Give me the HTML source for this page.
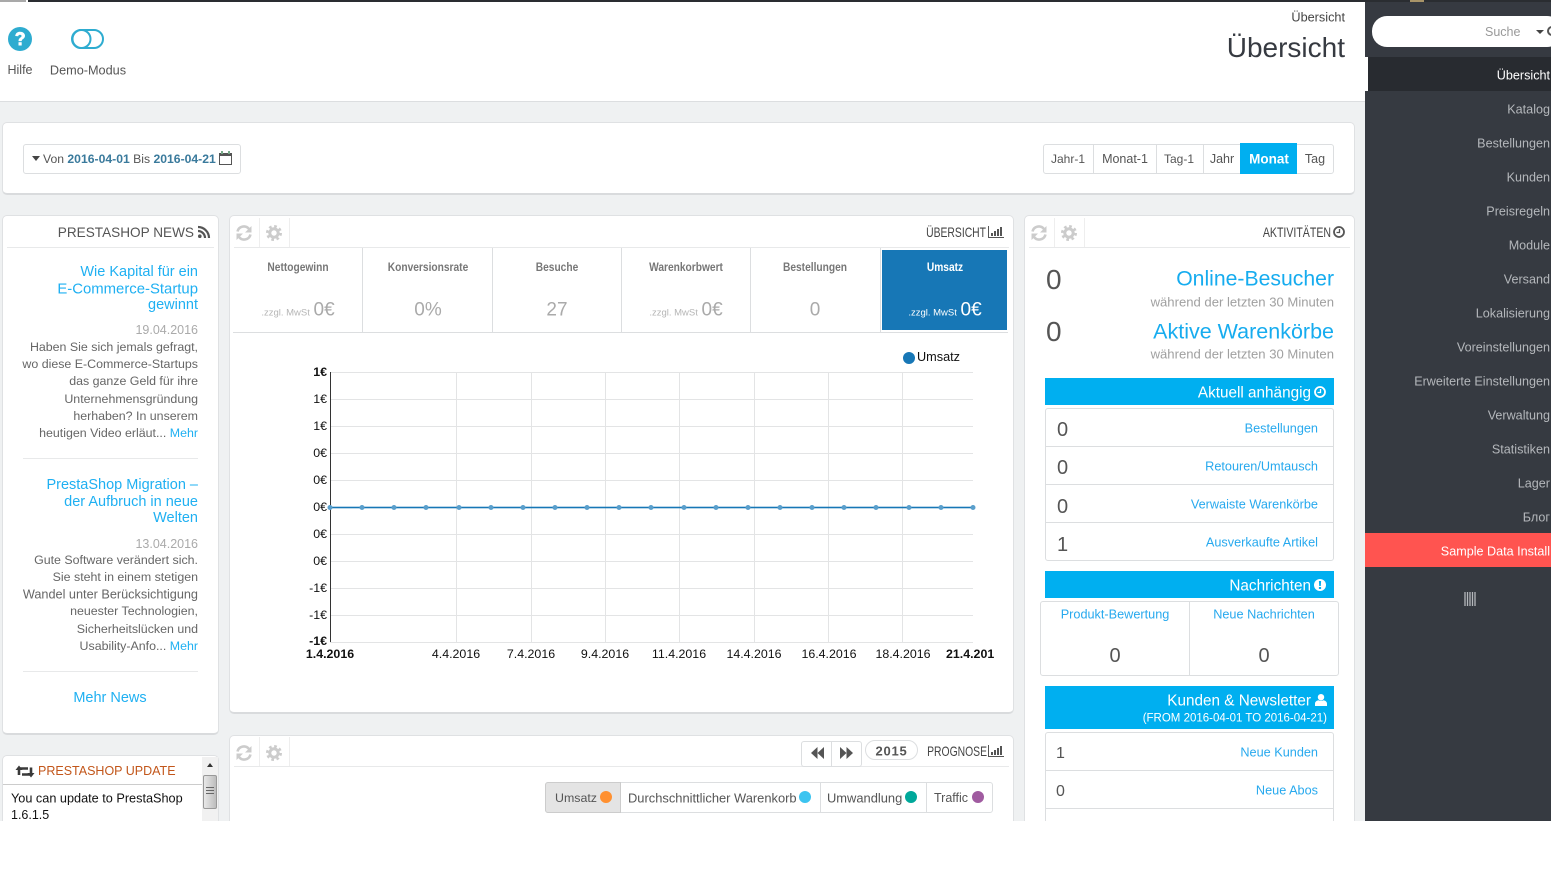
<!DOCTYPE html>
<html lang="de"><head><meta charset="utf-8"><title>Übersicht</title>
<style>
html,body{margin:0;padding:0;background:#fff}
#p{position:relative;width:1551px;height:821px;overflow:hidden;background:#eff1f2;font:13px "Liberation Sans",sans-serif;color:#555}
#w{position:relative;width:1551px;height:896px;overflow:hidden;background:#fff}
.b{position:absolute;box-sizing:border-box}
.l,.r,.c{position:absolute;white-space:nowrap;line-height:1}
.l{transform:translate(0,-50%)}.r{transform:translate(-100%,-50%)}.c{transform:translate(-50%,-50%)}
.panel{position:absolute;box-sizing:border-box;background:#fff;border:1px solid #dfe1e3;border-bottom:2px solid #d9dbdd;border-radius:5px}
.n{font-weight:400;transform:translate(-100%,-50%) scaleX(.74);transform-origin:100% 50%}
.bl{color:#1fb0f2}
.lk{color:#27a9ee;font-size:12.7px;margin-top:1px}
.side{color:#b4b7bb;font-size:12.6px;left:1550px;margin-top:1px}
.num{font-size:20px;color:#555}
.kl{font-weight:700;font-size:12px;color:#777;transform:translate(-50%,-50%) scaleX(.85)}
.kv{font-size:19px;color:#aaa}
.ks{font-size:9.5px;color:#b5b5b5}
.nt{color:#1fb0f2;font-size:14.5px;left:198px}
.nb{font-size:12.4px;color:#666;left:198px}
.nd{font-size:12.5px;color:#aaa;left:198px}
.bar{position:absolute;left:1045px;width:289px;background:#00aff0}
.wt{color:#fff;font-size:15.3px;margin-top:1px}
svg{position:absolute;overflow:visible}
</style></head><body>
<div id="w"><div id="p">

<!-- header -->
<div class="b" style="left:0;top:0;width:1365px;height:102px;background:#fff;border-bottom:1px solid #dcdee0"></div>
<div class="b" style="left:0;top:0;width:26px;height:2px;background:#a9a9a9"></div>
<div class="b" style="left:28px;top:0;width:1523px;height:2px;background:#2a2d31"></div>
<svg style="left:8px;top:27px" width="24" height="24" viewBox="0 0 24 24"><circle cx="12" cy="12" r="12" fill="#2eacd0"/><path d="M7.2 9C7.500 6 9.500 4.700 12 4.700c2.900 0 5 1.600 5 4.100 0 3.200-3.300 3.200-3.300 5.300h-3.200c0-3.500 3.100-3.600 3.100-5.100 0-.8-.7-1.300-1.600-1.300-1 0-1.600.6-1.800 1.600z" fill="#fff"/><rect x="10.500" y="15.200" width="3.200" height="3.300" fill="#fff"/></svg>
<svg style="left:71px;top:29px" width="33" height="20" viewBox="0 0 33 20"><rect x="1" y="1" width="31" height="18" rx="9" fill="#fff" stroke="#2eacd0" stroke-width="2"/><circle cx="10.500" cy="10" r="9" fill="#fff" stroke="#2eacd0" stroke-width="2"/></svg>
<span class="c" style="left:20px;top:70px;font-size:12.5px">Hilfe</span>
<span class="c" style="left:88px;top:71px;font-size:12.7px">Demo-Modus</span>
<span class="r" style="left:1345px;top:18px;font-size:12.7px;color:#444">Übersicht</span>
<span class="r" style="left:1345px;top:48px;font-size:28px;color:#363a41">Übersicht</span>

<!-- sidebar -->
<div class="b" style="left:1365px;top:2px;width:186px;height:819px;background:#363a41"></div>
<div class="b" style="left:1365px;top:57px;width:3px;height:34px;background:#fff"></div>
<div class="b" style="left:1368px;top:57px;width:183px;height:34px;background:#282b30"></div>
<div class="b" style="left:1410px;top:0;width:14px;height:2px;background:#a89468"></div>
<div class="b" style="left:1372px;top:16px;width:190px;height:31px;background:#fff;border-radius:15px"></div>
<span class="l" style="left:1485px;top:32px;font-size:12.5px;color:#999">Suche</span>
<div class="b" style="left:1536px;top:30px;border:4px solid transparent;border-top:4px solid #444;border-bottom:0"></div>
<div class="b" style="left:1547px;top:26px;width:10px;height:10px;border:2px solid #555;border-radius:50%"></div>
<span class="r side" style="top:75px;color:#fff">Übersicht</span>
<span class="r side" style="top:109px">Katalog</span>
<span class="r side" style="top:143px">Bestellungen</span>
<span class="r side" style="top:177px">Kunden</span>
<span class="r side" style="top:211px">Preisregeln</span>
<span class="r side" style="top:245px">Module</span>
<span class="r side" style="top:279px">Versand</span>
<span class="r side" style="top:313px">Lokalisierung</span>
<span class="r side" style="top:347px">Voreinstellungen</span>
<span class="r side" style="top:381px">Erweiterte Einstellungen</span>
<span class="r side" style="top:415px">Verwaltung</span>
<span class="r side" style="top:449px">Statistiken</span>
<span class="r side" style="top:483px">Lager</span>
<span class="r side" style="top:517px">Блог</span>
<div class="b" style="left:1365px;top:533px;width:186px;height:34px;background:#ff5450"></div>
<span class="r side" style="top:551px;color:#fff">Sample Data Install</span>
<svg style="left:1464px;top:592px" width="12" height="14"><path d="M1 0v14M3.500 0v14M6 0v14M8.500 0v14M11 0v14" stroke="#b4b7bb" stroke-width="1.300"/></svg>

<!-- date panel -->
<div class="panel" style="left:2px;top:122px;width:1353px;height:73px"></div>
<div class="b" style="left:23px;top:144px;width:218px;height:30px;background:#fff;border:1px solid #dcdee0;border-radius:3px"></div>
<div class="b" style="left:32px;top:156px;border:4.500px solid transparent;border-top:5px solid #444;border-bottom:0"></div>
<span class="l" style="left:43px;top:159px;font-size:12.2px">Von <b style="color:#3a7a9c">2016-04-01</b> Bis <b style="color:#3a7a9c">2016-04-21</b></span>
<svg style="left:219px;top:151px" width="13" height="14"><rect x=".5" y="2.500" width="12" height="11" fill="#fff" stroke="#555"/><rect x=".5" y="2.500" width="12" height="2.500" fill="#555"/><path d="M3 0v3M10 0v3" stroke="#7a8" stroke-width="2"/></svg>
<div class="b" style="left:1043px;top:144px;width:291px;height:30px;background:#fff;border:1px solid #dcdee0;border-radius:3px"></div>
<div class="b" style="left:1093px;top:144px;width:1px;height:30px;background:#dcdee0"></div>
<div class="b" style="left:1156px;top:144px;width:1px;height:30px;background:#dcdee0"></div>
<div class="b" style="left:1203px;top:144px;width:1px;height:30px;background:#dcdee0"></div>
<div class="b" style="left:1240px;top:143px;width:57px;height:31px;background:#00aff0"></div>
<span class="c" style="left:1068px;top:159px;font-size:12px">Jahr-1</span>
<span class="c" style="left:1125px;top:159px;font-size:12.5px">Monat-1</span>
<span class="c" style="left:1179px;top:159px;font-size:12px">Tag-1</span>
<span class="c" style="left:1222px;top:159px;font-size:12.5px">Jahr</span>
<span class="c" style="left:1269px;top:159px;font-size:13.5px;color:#fff;font-weight:700">Monat</span>
<span class="c" style="left:1315px;top:159px;font-size:12.5px">Tag</span>

<!-- news panel -->
<div class="panel" style="left:2px;top:215px;width:217px;height:520px"></div>
<span class="r" style="left:194px;top:233px;font-size:13.6px;color:#555">PRESTASHOP NEWS</span>
<svg style="left:198px;top:226px" width="12" height="12" viewBox="0 0 12 12"><circle cx="1.800" cy="10.200" r="1.800" fill="#555"/><path d="M0 5a7 7 0 0 1 7 7M0 1a11 11 0 0 1 11 11" fill="none" stroke="#555" stroke-width="2.200"/></svg>
<div class="b" style="left:7px;top:247px;width:207px;height:1px;background:#e8e9ea"></div>
<span class="r nt" style="top:272px">Wie Kapital für ein</span>
<span class="r nt" style="top:290px;font-size:14.9px">E-Commerce-Startup</span>
<span class="r nt" style="top:305px">gewinnt</span>
<span class="r nd" style="top:330px">19.04.2016</span>
<span class="r nb" style="top:347px">Haben Sie sich jemals gefragt,</span>
<span class="r nb" style="top:364px">wo diese E-Commerce-Startups</span>
<span class="r nb" style="top:381px">das ganze Geld für ihre</span>
<span class="r nb" style="top:399px">Unternehmensgründung</span>
<span class="r nb" style="top:416px">herhaben? In unserem</span>
<span class="r nb" style="top:433px">heutigen Video erläut... <span class="bl">Mehr</span></span>
<div class="b" style="left:23px;top:458px;width:175px;height:1px;background:#e8e9ea"></div>
<span class="r nt" style="top:485px">PrestaShop Migration –</span>
<span class="r nt" style="top:502px">der Aufbruch in neue</span>
<span class="r nt" style="top:518px">Welten</span>
<span class="r nd" style="top:544px">13.04.2016</span>
<span class="r nb" style="top:560px">Gute Software verändert sich.</span>
<span class="r nb" style="top:577px">Sie steht in einem stetigen</span>
<span class="r nb" style="top:595px;font-size:12.7px">Wandel unter Berücksichtigung</span>
<span class="r nb" style="top:611px">neuester Technologien,</span>
<span class="r nb" style="top:629px">Sicherheitslücken und</span>
<span class="r nb" style="top:646px">Usability-Anfo... <span class="bl">Mehr</span></span>
<div class="b" style="left:23px;top:671px;width:175px;height:1px;background:#e8e9ea"></div>
<span class="c bl" style="left:110px;top:698px;font-size:14.500px">Mehr News</span>

<!-- update panel -->
<div class="panel" style="left:2px;top:755px;width:217px;height:90px"></div>
<svg style="left:16px;top:765px" width="18" height="13" viewBox="0 0 18 13"><path d="M3 10V3.500h9M15 2.500v7H6" fill="none" stroke="#3a3a3a" stroke-width="2.600"/><path d="M-.5 5L3 .5 6.500 5zM11.500 8l3.500 4.500L18.500 8z" fill="#3a3a3a"/></svg>
<span class="l" style="left:38px;top:771px;font-size:12.500px;color:#c2561a">PRESTASHOP UPDATE</span>
<div class="b" style="left:3px;top:784px;width:199px;height:1px;background:#ccc"></div>
<span class="l" style="left:11px;top:799px;font-size:12.7px;color:#111">You can update to PrestaShop</span>
<span class="l" style="left:11px;top:815px;font-size:12.500px;color:#111">1.6.1.5</span>
<div class="b" style="left:202px;top:757px;width:16px;height:64px;background:#f1f1f1"></div>
<div class="b" style="left:207px;top:763px;border:3px solid transparent;border-bottom:4px solid #333;border-top:0"></div>
<div class="b" style="left:203px;top:775px;width:14px;height:34px;background:linear-gradient(90deg,#e8e8e8,#bdbdbd);border:1px solid #999;border-radius:2px"></div>
<svg style="left:206px;top:787px" width="8" height="8"><path d="M0 .5h8M0 3.500h8M0 6.500h8" stroke="#666"/></svg>

<!-- chart panel -->
<div class="panel" style="left:229px;top:215px;width:785px;height:499px"></div>
<div class="b" style="left:234px;top:247px;width:775px;height:1px;background:#e8e9ea"></div>
<div class="b" style="left:259px;top:218px;width:1px;height:29px;background:#eee"></div>
<div class="b" style="left:289px;top:218px;width:1px;height:29px;background:#eee"></div>
<svg style="left:236px;top:225px" width="16" height="16" viewBox="0 0 16 16"><path d="M1.500 6.500A6.500 6.500 0 0 1 13 4M14.500 9.500A6.500 6.500 0 0 1 3 12" fill="none" stroke="#ccc" stroke-width="2.600"/><path d="M15.500 1v6.500H9zM.5 15V8.500H7z" fill="#ccc"/></svg>
<svg style="left:266px;top:225px" width="16" height="16" viewBox="0 0 16 16"><circle cx="8" cy="8" r="4.200" fill="none" stroke="#ccc" stroke-width="3"/><circle cx="8" cy="8" r="6.600" fill="none" stroke="#ccc" stroke-width="2.800" stroke-dasharray="2.600 2.580"/></svg>
<span class="r n" style="left:986px;top:232px;font-size:14px;color:#444">ÜBERSICHT</span>
<svg style="left:988px;top:226px" width="16" height="12"><path d="M.5 0v11.500H16" fill="none" stroke="#555"/><path d="M3 7h2v3H3zM6 5h2v5H6zM9 3h2v7H9zM12 1h2v9h-2z" fill="#555"/></svg>

<div class="b" style="left:233px;top:332px;width:775px;height:1px;background:#dcdee0"></div>
<div class="b" style="left:362px;top:248px;width:1px;height:84px;background:#dcdee0"></div>
<div class="b" style="left:492px;top:248px;width:1px;height:84px;background:#dcdee0"></div>
<div class="b" style="left:621px;top:248px;width:1px;height:84px;background:#dcdee0"></div>
<div class="b" style="left:750px;top:248px;width:1px;height:84px;background:#dcdee0"></div>
<div class="b" style="left:880px;top:248px;width:1px;height:84px;background:#dcdee0"></div>
<div class="b" style="left:882px;top:250px;width:125px;height:80px;background:#1777b6"></div>
<span class="c kl" style="left:298px;top:267px">Nettogewinn</span>
<span class="c kl" style="left:428px;top:267px">Konversionsrate</span>
<span class="c kl" style="left:557px;top:267px">Besuche</span>
<span class="c kl" style="left:686px;top:267px">Warenkorbwert</span>
<span class="c kl" style="left:815px;top:267px">Bestellungen</span>
<span class="c kl" style="left:945px;top:267px;color:#fff">Umsatz</span>
<span class="c" style="left:298px;top:310px;white-space:nowrap"><span class="ks">.zzgl. MwSt</span> <span class="kv">0€</span></span>
<span class="c kv" style="left:428px;top:310px">0%</span>
<span class="c kv" style="left:557px;top:310px">27</span>
<span class="c" style="left:686px;top:310px"><span class="ks">.zzgl. MwSt</span> <span class="kv">0€</span></span>
<span class="c kv" style="left:815px;top:310px">0</span>
<span class="c" style="left:945px;top:310px;color:#fff"><span class="ks" style="color:#fff">.zzgl. MwSt</span> <span class="kv" style="color:#fff">0€</span></span>

<svg style="left:0;top:0" width="1551" height="821" font-family="Liberation Sans, sans-serif" font-size="12.4" fill="#111">
<path d="M330 372.500H973M330 399.500H973M330 426.500H973M330 453.500H973M330 480.500H973M330 534.500H973M330 561.500H973M330 588.500H973M330 615.500H973M330 642.500H973M456.500 372V642M531.500 372V642M605.500 372V642M679.500 372V642M754.500 372V642M828.500 372V642M902.500 372V642" stroke="#e3e4e5" fill="none"/>
<path d="M330.500 372V642" stroke="#333"/>
<path d="M330 507.500H973" stroke="#1777b6" stroke-opacity=".4" stroke-width="2.500"/>
<path d="M330 507.500H973" stroke="#1777b6" stroke-width="1"/>
<g fill="#5a9fcc"><circle cx="330" cy="507.500" r="2.500"/><circle cx="362" cy="507.500" r="2.500"/><circle cx="394" cy="507.500" r="2.500"/><circle cx="426" cy="507.500" r="2.500"/><circle cx="459" cy="507.500" r="2.500"/><circle cx="491" cy="507.500" r="2.500"/><circle cx="523" cy="507.500" r="2.500"/><circle cx="555" cy="507.500" r="2.500"/><circle cx="587" cy="507.500" r="2.500"/><circle cx="619" cy="507.500" r="2.500"/><circle cx="651" cy="507.500" r="2.500"/><circle cx="684" cy="507.500" r="2.500"/><circle cx="716" cy="507.500" r="2.500"/><circle cx="748" cy="507.500" r="2.500"/><circle cx="780" cy="507.500" r="2.500"/><circle cx="812" cy="507.500" r="2.500"/><circle cx="844" cy="507.500" r="2.500"/><circle cx="876" cy="507.500" r="2.500"/><circle cx="909" cy="507.500" r="2.500"/><circle cx="941" cy="507.500" r="2.500"/><circle cx="973" cy="507.500" r="2.500"/></g>
<g text-anchor="end"><text x="327" y="376" font-weight="700">1€</text><text x="327" y="403">1€</text><text x="327" y="430">1€</text><text x="327" y="457">0€</text><text x="327" y="484">0€</text><text x="327" y="511">0€</text><text x="327" y="538">0€</text><text x="327" y="565">0€</text><text x="327" y="592">-1€</text><text x="327" y="619">-1€</text><text x="327" y="645" font-weight="700">-1€</text></g>
<g text-anchor="middle"><text x="330" y="658" font-weight="700">1.4.2016</text><text x="456" y="658">4.4.2016</text><text x="531" y="658">7.4.2016</text><text x="605" y="658">9.4.2016</text><text x="679" y="658">11.4.2016</text><text x="754" y="658">14.4.2016</text><text x="829" y="658">16.4.2016</text><text x="903" y="658">18.4.2016</text></g>
<text x="946" y="658" font-weight="700">21.4.201</text>
<circle cx="909" cy="358" r="6" fill="#1777b6"/><text x="917" y="361" font-size="12.700">Umsatz</text>
</svg>

<!-- prognose panel -->
<div class="panel" style="left:229px;top:735px;width:785px;height:110px"></div>
<div class="b" style="left:234px;top:766px;width:775px;height:1px;background:#e8e9ea"></div>
<div class="b" style="left:259px;top:737px;width:1px;height:29px;background:#eee"></div>
<div class="b" style="left:289px;top:737px;width:1px;height:29px;background:#eee"></div>
<svg style="left:236px;top:745px" width="16" height="16" viewBox="0 0 16 16"><path d="M1.500 6.500A6.500 6.500 0 0 1 13 4M14.500 9.500A6.500 6.500 0 0 1 3 12" fill="none" stroke="#ccc" stroke-width="2.600"/><path d="M15.500 1v6.500H9zM.5 15V8.500H7z" fill="#ccc"/></svg>
<svg style="left:266px;top:745px" width="16" height="16" viewBox="0 0 16 16"><circle cx="8" cy="8" r="4.200" fill="none" stroke="#ccc" stroke-width="3"/><circle cx="8" cy="8" r="6.600" fill="none" stroke="#ccc" stroke-width="2.800" stroke-dasharray="2.600 2.580"/></svg>
<div class="b" style="left:801px;top:741px;width:61px;height:26px;border:1px solid #dcdee0;border-radius:3px;background:#fff"></div>
<div class="b" style="left:831px;top:741px;width:1px;height:26px;background:#dcdee0"></div>
<svg style="left:811px;top:747px" width="13" height="12"><path d="M6.500 0v12L0 6zM13 0v12L6.500 6z" fill="#555"/></svg>
<svg style="left:840px;top:747px" width="13" height="12"><path d="M0 0v12l6.500-6zM6.500 0v12L13 6z" fill="#555"/></svg>
<div class="b" style="left:865px;top:740px;width:53px;height:20px;border:1px solid #dcdee0;border-radius:10px"></div>
<span class="c" style="left:891.500px;top:751px;font-size:13px;font-weight:700;letter-spacing:.8px;color:#555">2015</span>
<span class="r n" style="left:987px;top:751px;font-size:14px;color:#444">PROGNOSE</span>
<svg style="left:988px;top:745px" width="16" height="12"><path d="M.5 0v11.500H16" fill="none" stroke="#555"/><path d="M3 7h2v3H3zM6 5h2v5H6zM9 3h2v7H9zM12 1h2v9h-2z" fill="#555"/></svg>
<div class="b" style="left:545px;top:782px;width:448px;height:31px;border:1px solid #dcdee0;border-radius:3px;background:#fff"></div>
<div class="b" style="left:545px;top:782px;width:76px;height:31px;background:#e4e4e4;border:1px solid #ccc;border-radius:3px 0 0 3px"></div>
<div class="b" style="left:820px;top:782px;width:1px;height:31px;background:#dcdee0"></div>
<div class="b" style="left:926px;top:782px;width:1px;height:31px;background:#dcdee0"></div>
<span class="l" style="left:555px;top:798px;font-size:12.4px">Umsatz</span>
<span class="l" style="left:628px;top:799px;font-size:12.9px">Durchschnittlicher Warenkorb</span>
<span class="l" style="left:827px;top:799px;font-size:12.9px">Umwandlung</span>
<span class="l" style="left:934px;top:798px;font-size:12.500px">Traffic</span>
<svg style="left:0;top:0" width="1551" height="821"><circle cx="606" cy="797" r="6" fill="#ff9030"/><circle cx="805" cy="797" r="6" fill="#3cc4f0"/><circle cx="911" cy="797" r="6" fill="#00a89a"/><circle cx="978" cy="797" r="6" fill="#a05ba0"/></svg>

<!-- activity panel -->
<div class="panel" style="left:1024px;top:215px;width:331px;height:630px"></div>
<div class="b" style="left:1029px;top:247px;width:321px;height:1px;background:#e8e9ea"></div>
<div class="b" style="left:1054px;top:218px;width:1px;height:29px;background:#eee"></div>
<div class="b" style="left:1084px;top:218px;width:1px;height:29px;background:#eee"></div>
<svg style="left:1031px;top:225px" width="16" height="16" viewBox="0 0 16 16"><path d="M1.500 6.500A6.500 6.500 0 0 1 13 4M14.500 9.500A6.500 6.500 0 0 1 3 12" fill="none" stroke="#ccc" stroke-width="2.600"/><path d="M15.500 1v6.500H9zM.5 15V8.500H7z" fill="#ccc"/></svg>
<svg style="left:1061px;top:225px" width="16" height="16" viewBox="0 0 16 16"><circle cx="8" cy="8" r="4.200" fill="none" stroke="#ccc" stroke-width="3"/><circle cx="8" cy="8" r="6.600" fill="none" stroke="#ccc" stroke-width="2.800" stroke-dasharray="2.600 2.580"/></svg>
<span class="r n" style="left:1331px;top:232px;font-size:14px;color:#444;transform:translate(-100%,-50%) scaleX(.755)">AKTIVITÄTEN</span>
<svg style="left:1333px;top:226px" width="12" height="12" viewBox="0 0 12 12"><circle cx="6" cy="6" r="5" fill="none" stroke="#555" stroke-width="1.800"/><path d="M6.500 3v3.500H3.500" fill="none" stroke="#555" stroke-width="1.300"/></svg>
<span class="l" style="left:1046px;top:280px;font-size:28px;color:#555">0</span>
<span class="r bl" style="left:1334px;top:279px;font-size:21.2px;color:#16acef">Online-Besucher</span>
<span class="r" style="left:1334px;top:302px;font-size:13.1px;color:#a0a0a0">während der letzten 30 Minuten</span>
<span class="l" style="left:1046px;top:332px;font-size:28px;color:#555">0</span>
<span class="r bl" style="left:1334px;top:332px;font-size:21.5px;color:#16acef">Aktive Warenkörbe</span>
<span class="r" style="left:1334px;top:354px;font-size:13.1px;color:#a0a0a0">während der letzten 30 Minuten</span>

<div class="bar" style="top:378px;height:27px"></div>
<span class="r wt" style="left:1311px;top:392px">Aktuell anhängig</span>
<svg style="left:1314px;top:386px" width="12" height="12" viewBox="0 0 12 12"><circle cx="6" cy="6" r="5" fill="none" stroke="#fff" stroke-width="1.800"/><path d="M6.500 3v3.500H3.500" fill="none" stroke="#fff" stroke-width="1.300"/></svg>
<div class="b" style="left:1045px;top:408px;width:289px;height:153px;border:1px solid #dcdee0;border-radius:3px"></div>
<div class="b" style="left:1045px;top:446px;width:289px;height:1px;background:#dcdee0"></div>
<div class="b" style="left:1045px;top:484px;width:289px;height:1px;background:#dcdee0"></div>
<div class="b" style="left:1045px;top:522px;width:289px;height:1px;background:#dcdee0"></div>
<span class="l num" style="left:1057px;top:430px">0</span><span class="r lk" style="left:1318px;top:428px">Bestellungen</span>
<span class="l num" style="left:1057px;top:468px">0</span><span class="r lk" style="left:1318px;top:466px">Retouren/Umtausch</span>
<span class="l num" style="left:1057px;top:507px">0</span><span class="r lk" style="left:1318px;top:504px">Verwaiste Warenkörbe</span>
<span class="l num" style="left:1057px;top:545px">1</span><span class="r lk" style="left:1318px;top:542px">Ausverkaufte Artikel</span>

<div class="bar" style="top:571px;height:27px"></div>
<span class="r wt" style="left:1311px;top:585px">Nachrichten</span>
<svg style="left:1314px;top:579px" width="12" height="12" viewBox="0 0 12 12"><circle cx="6" cy="6" r="6" fill="#fff"/><path d="M4.900 2h2.200l-.3 5H5.200zM4.900 8h2.200v2H4.900z" fill="#00aff0"/></svg>
<div class="b" style="left:1040px;top:601px;width:299px;height:75px;border:1px solid #dcdee0;border-radius:3px"></div>
<div class="b" style="left:1189px;top:601px;width:1px;height:75px;background:#dcdee0"></div>
<span class="c lk" style="left:1115px;top:614px">Produkt-Bewertung</span>
<span class="c lk" style="left:1264px;top:614px">Neue Nachrichten</span>
<span class="c num" style="left:1115px;top:656px">0</span>
<span class="c num" style="left:1264px;top:656px">0</span>

<div class="bar" style="top:686px;height:43px"></div>
<span class="r wt" style="left:1311px;top:700px">Kunden &amp; Newsletter</span>
<svg style="left:1315px;top:694px" width="12" height="12" viewBox="0 0 12 12"><circle cx="6" cy="3.200" r="3.200" fill="#fff"/><path d="M0 12V9.500C0 7.500 2 6.500 3.500 6.200 4.500 7 7.500 7 8.500 6.200 10 6.500 12 7.500 12 9.500V12z" fill="#fff"/></svg>
<span class="r" style="left:1327px;top:719px;font-size:11.5px;color:#fff">(FROM 2016-04-01 TO 2016-04-21)</span>
<div class="b" style="left:1045px;top:732px;width:289px;height:110px;border:1px solid #dcdee0;border-radius:3px"></div>
<div class="b" style="left:1045px;top:770px;width:289px;height:1px;background:#dcdee0"></div>
<div class="b" style="left:1045px;top:808px;width:289px;height:1px;background:#dcdee0"></div>
<span class="l" style="left:1056px;top:754px;font-size:16px">1</span><span class="r lk" style="left:1318px;top:752px">Neue Kunden</span>
<span class="l" style="left:1056px;top:792px;font-size:16px">0</span><span class="r lk" style="left:1318px;top:790px">Neue Abos</span>

</div></div>
</body></html>
